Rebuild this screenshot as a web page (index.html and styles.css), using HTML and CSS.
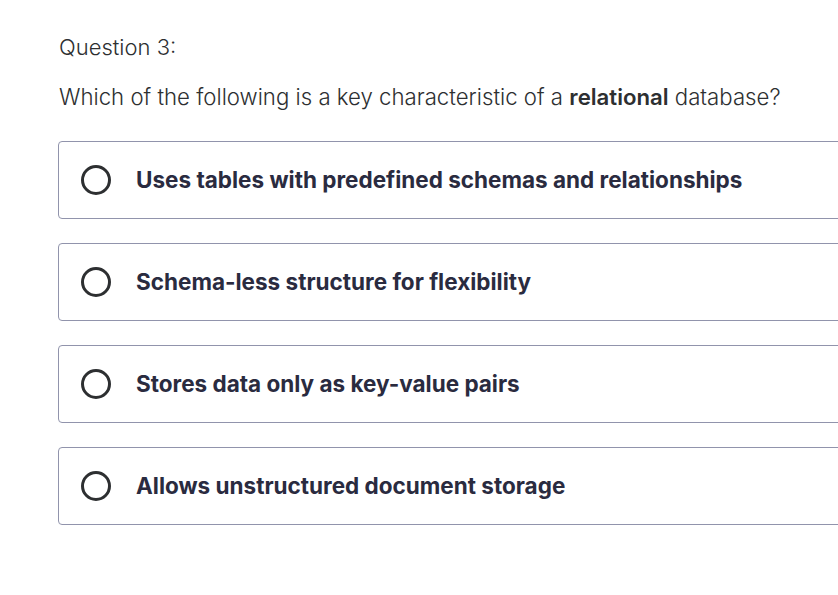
FILE: index.html
```html
<!DOCTYPE html>
<html>
<head>
<meta charset="utf-8">
<link rel="stylesheet" href="styles.css">
</head>
<body>
<div class="quiz">
  <div class="qnum">Question 3:</div>
  <p class="prompt">Which of the following is a key characteristic of a <strong>relational</strong> database?</p>
  <ul class="options">
    <li class="option"><span class="radio"></span><span class="label">Uses tables with predefined schemas and relationships</span></li>
    <li class="option"><span class="radio"></span><span class="label">Schema-less structure for flexibility</span></li>
    <li class="option"><span class="radio"></span><span class="label">Stores data only as key-value pairs</span></li>
    <li class="option"><span class="radio"></span><span class="label">Allows unstructured document storage</span></li>
  </ul>
</div>
</body>
</html>
```
FILE: styles.css
```css
html, body {
  margin: 0;
  padding: 0;
  background: #ffffff;
}
body {
  font-family: Inter, "Noto Sans", sans-serif;
  color: #2d2f31;
  overflow: hidden;
}
.quiz {
  padding: 33px 0 0 59px;
}
.qnum {
  font-size: 22px;
  font-weight: 300;
  line-height: 28px;
}
.prompt {
  margin: 22px 0 0 0;
  font-size: 22.2px;
  font-weight: 300;
  line-height: 28px;
}
.prompt strong {
  font-weight: 600;
}
.options {
  list-style: none;
  margin: 30px 0 0 -1px;
  padding: 0;
  display: flex;
  flex-direction: column;
  gap: 24px;
}
.option {
  width: 820px;
  height: 78px;
  border: 1px solid #9194ac;
  border-radius: 4px;
  display: flex;
  align-items: center;
  padding-left: 22px;
  box-sizing: border-box;
}
.radio {
  width: 30px;
  height: 30px;
  border: 3px solid #2d2f31;
  border-radius: 50%;
  box-sizing: border-box;
  flex: none;
}
.label {
  margin-left: 25px;
  font-size: 22.5px;
  font-weight: 700;
  line-height: 28px;
  color: #2a2b3f;
}
```
